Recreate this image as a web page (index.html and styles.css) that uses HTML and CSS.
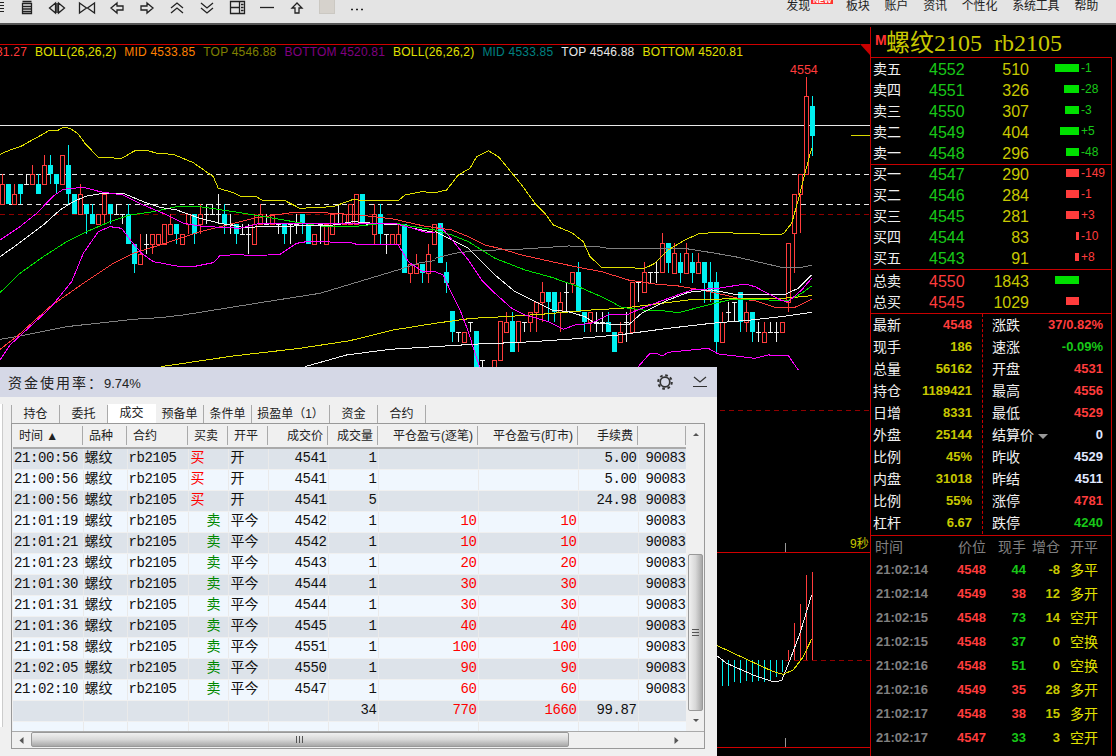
FILE: index.html
```html
<!DOCTYPE html>
<html lang="zh">
<head>
<meta charset="utf-8">
<title>螺纹2105</title>
<link rel="stylesheet" href="styles.css">
</head>
<body>
<header class="toolbar">
  <span class="sliver"></span>
  <svg class="tool" viewBox="0 0 30 16"><path d="M10.5 1.5h9M10.5 3.5h9v10h-9zM10.5 6.5h9M10.5 9h9M10.5 11.5h9"/></svg>
  <svg class="tool" viewBox="0 0 30 16"><path d="M13.5 3l-6 5 6 5zM16.5 3l6 5-6 5zM15 3v10"/></svg>
  <svg class="tool" viewBox="0 0 30 16"><path d="M7.5 3v10l7-5zM22.5 3v10l-7-5z"/></svg>
  <svg class="tool" viewBox="0 0 30 16"><path d="M15 3l-6 5 6 5v-3h6V6h-6z"/></svg>
  <svg class="tool" viewBox="0 0 30 16"><path d="M15 3l6 5-6 5v-3H9V6h6z"/></svg>
  <svg class="tool" viewBox="0 0 30 16"><path d="M9 8l6-5 6 5M9 13l6-5 6 5"/></svg>
  <svg class="tool" viewBox="0 0 30 16"><path d="M9 3l6 5 6-5M9 8l6 5 6-5"/></svg>
  <svg class="tool" viewBox="0 0 30 16"><path d="M8.500 1.500h14v12h-14zM17.500 1.500v12M8.500 7.500h9M19 4.500h2.500M19 7.500h2.500M19 10.500h2.500"/></svg>
  <svg class="tool" viewBox="0 0 30 16"><path d="M8 7.500h14"/></svg>
  <svg class="tool" viewBox="0 0 30 16"><path d="M15 3l-5 5h3v5h4V8h3z"/></svg>
  <span class="tool-swatch"><span class="swatch"></span></span>
  <svg class="tool" viewBox="0 0 30 16"><path d="M9 9.500h2M14 9.500h2M19 9.500h2"/></svg>
  <nav class="menu">
    <span class="menu-item menu-new">发现<i class="badge">NEW</i></span>
    <span class="menu-item">板块</span>
    <span class="menu-item">账户</span>
    <span class="menu-item">资讯</span>
    <span class="menu-item">个性化</span>
    <span class="menu-item">系统工具</span>
    <span class="menu-item">帮助</span>
  </nav>
</header>

<main class="main">
  <section class="chart">
    <svg class="plot" viewBox="0 25 870 731" width="870" height="731">
      <path class="hl red-line" d="M0 44.500H860M0 552.500H870M0 747.500H870"/>
      <path class="corner" d="M860 44h10v11z"/>
      <path class="hl white-line" d="M0 125.500H870"/>
      <path class="hl yellow-line" d="M851 135.500H870"/>
      <path class="hl white-dash" d="M0 174.500H870M0 204.500H870"/>
      <path class="hl red-dash" d="M0 214.500H870M0 410.500H870M785 660.500H870"/>
      <path class="tick-mark" d="M785.500 543V552M785.500 738V747"/>

      <path class="c-red" d="M2.500 174V184M14.500 184V194M32.500 165V174M44.500 155V165M80.500 184V194M104.500 214V224M140.500 234V254M152.500 244V254M170.500 214V224M188.500 224V234M200.500 204V234M254.500 214V224M260.500 204V214M374.500 204V244M398.500 224V234M410.500 273V283M416.500 254V264M428.500 244V283M506.500 312V322M518.500 342V352M530.500 322V332M536.500 312V332M542.500 282V322M560.500 292V332M572.500 283V293M590.500 322V332M620.500 322V332M644.500 262V272M662.500 233V243M674.500 243V253M686.500 243V253M698.500 253V262M722.500 312V322M746.500 302V332M764.500 322V332M788.500 302V312M794.500 233V273M800.500 194V233M806.500 77V96"/>
      <path class="c-redbody" d="M.5 184.500h4v20h-4zM12.500 194.500h4v10h-4zM30.500 174.500h4v10h-4zM42.500 165.500h4v19h-4zM60.500 155.500h4v29h-4zM78.500 194.500h4v20h-4zM96.500 214.500h4v10h-4zM102.500 194.500h4v20h-4zM138.500 254.500h4v10h-4zM150.500 234.500h4v10h-4zM156.500 234.500h4v10h-4zM162.500 224.500h4v20h-4zM168.500 224.500h4v10h-4zM180.500 234.500h4v10h-4zM186.500 214.500h4v10h-4zM198.500 214.500h4v10h-4zM252.500 224.500h4v20h-4zM258.500 214.500h4v10h-4zM270.500 214.500h4v10h-4zM312.500 234.500h4v10h-4zM324.500 224.500h4v20h-4zM330.500 214.500h4v20h-4zM342.500 214.500h4v10h-4zM348.500 204.500h4v20h-4zM354.500 194.500h4v30h-4zM372.500 214.500h4v20h-4zM390.500 234.500h4v10h-4zM396.500 234.500h4v10h-4zM408.500 264.500h4v9h-4zM414.500 264.500h4v9h-4zM426.500 254.500h4v19h-4zM432.500 224.500h4v20h-4zM462.500 332.500h4v10h-4zM492.500 360.500h4v10h-4zM498.500 321.500h4v39h-4zM504.500 322.500h4v10h-4zM516.500 321.500h4v21h-4zM528.500 312.500h4v10h-4zM534.500 302.500h4v10h-4zM540.500 292.500h4v10h-4zM558.500 302.500h4v10h-4zM570.500 272.500h4v11h-4zM588.500 312.500h4v10h-4zM618.500 332.500h4v10h-4zM630.500 282.500h4v50h-4zM642.500 272.500h4v20h-4zM660.500 243.500h4v29h-4zM672.500 253.500h4v20h-4zM684.500 253.500h4v20h-4zM696.500 262.500h4v11h-4zM720.500 322.500h4v20h-4zM744.500 312.500h4v10h-4zM762.500 332.500h4v10h-4zM780.500 322.500h4v10h-4zM786.500 243.500h4v59h-4zM792.500 194.500h4v39h-4zM798.500 174.500h4v20h-4zM804.500 96.500h4v78h-4z"/>
      <path class="c-cyan" d="M20.500 194V204M38.500 174V184M50.500 155V184M56.500 184V194M68.500 145V204M86.500 214V234M92.500 204V214M110.500 214V224M128.500 204V214M134.500 264V273M176.500 234V244M194.500 234V244M224.500 204V234M236.500 234V244M284.500 234V244M302.500 224V234M380.500 204V244M422.500 273V283M446.500 262V293M452.500 332V342M512.500 312V321M548.500 302V322M554.500 312V322M578.500 262V272M584.500 322V332M608.500 312V322M668.500 263V273M680.500 253V283M692.500 253V283M704.500 283V303M710.500 262V302M716.500 272V352M740.500 322V332M752.500 332V342M812.500 96V156"/>
      <path class="c-cyanbody" d="M6 184h5v20h-5zM18 184h5v10h-5zM36 184h5v10h-5zM48 165h5v9h-5zM54 174h5v10h-5zM66 165h5v29h-5zM72 194h5v20h-5zM84 204h5v10h-5zM90 214h5v10h-5zM108 204h5v10h-5zM126 214h5v30h-5zM132 244h5v20h-5zM174 224h5v10h-5zM192 214h5v20h-5zM222 214h5v10h-5zM234 224h5v10h-5zM282 224h5v10h-5zM300 214h5v10h-5zM306 224h5v20h-5zM360 194h5v30h-5zM378 214h5v20h-5zM402 224h5v49h-5zM420 264h5v9h-5zM438 223h5v40h-5zM444 272h5v11h-5zM450 311h5v21h-5zM474 331h5v39h-5zM510 321h5v31h-5zM546 292h5v10h-5zM552 292h5v20h-5zM576 272h5v40h-5zM582 312h5v10h-5zM606 322h5v10h-5zM612 332h5v20h-5zM666 243h5v20h-5zM678 262h5v11h-5zM690 262h5v11h-5zM702 262h5v21h-5zM708 282h5v10h-5zM714 282h5v60h-5zM738 292h5v30h-5zM750 312h5v20h-5zM810 106h5v30h-5z"/>
      <path class="c-white" d="M24 184.500h5M26.500 174V184M114 214.500h5M116.500 204V214M120 214.500h5M122.500 214V224M144 244.500h5M146.500 234V254M204 214.500h5M206.500 204V224M210 214.500h5M212.500 204V214M216 214.500h5M218.500 194V224M228 224.500h5M230.500 214V234M240 234.500h5M242.500 224V234M246 234.500h5M248.500 224V254M264 224.500h5M266.500 214V224M276 224.500h5M278.500 224V234M288 224.500h5M290.500 224V244M294 224.500h5M296.500 214V234M318 224.500h5M320.500 224V244M336 224.500h5M338.500 204V224M366 224.500h5M384 234.500h5M386.500 234V254M456 332.500h5M458.500 332V342M468 322.500h5M470.500 322V332M480 360.500h5M482.500 360V370M522 322.500h5M524.500 322V332M564 292.500h5M566.500 283V312M594 322.500h5M596.500 312V332M600 322.500h5M602.500 312V332M624 322.500h5M626.500 312V342M636 282.500h5M638.500 282V302M648 272.500h5M650.500 272V283M654 272.500h5M656.500 262V283M726 312.500h5M728.500 302V322M732 302.500h5M734.500 302V322M756 332.500h5M758.500 322V342M768 332.500h5M770.500 322V332M774 332.500h5M776.500 322V342"/>

      <g transform="translate(0 110) scale(.3333)">
        <polyline class="ln gray" points="0,688 60,678 200,650 400,628 480,623 550,615 800,575 960,550 1200,478 1260,458 1305,452"/>
        <polyline class="ln yellow" points="0,133 30,120 65,108 100,88 130,72 150,60 170,63 190,52 210,55 235,72 255,100 295,142 365,145 405,122 445,122 470,130 520,133 580,158 640,200 655,235 700,248 720,258 770,260 785,270 855,272 900,295 1000,290 1060,268 1090,272 1195,272 1215,255 1265,245 1305,248"/>
        <polyline class="ln yellow" points="483,770 700,738 900,715 1050,692 1180,660 1305,640"/>
        <polyline class="ln white" points="915,770 1040,735 1170,718 1305,710"/>
        <polyline class="ln red" points="0,718 50,680 150,590 250,520 340,460 400,430 480,405 600,365 680,345 760,325 880,307 950,307 1080,315 1180,327 1280,350 1305,352"/>
        <polyline class="ln green" points="0,548 60,490 130,440 200,395 260,365 330,335 390,315 460,305 530,290 600,290 720,308 780,318 880,335 960,348 1060,350 1130,342 1200,342 1240,350 1305,360"/>
        <polyline class="ln white" points="0,440 50,405 130,345 180,300 220,275 260,258 310,250 370,250 430,275 480,292 530,300 600,325 660,340 730,352 1000,345 1060,335 1120,340 1200,345 1240,355 1305,368"/>
        <polyline class="ln magenta" points="0,390 60,350 110,310 160,258 190,238 250,232 300,245 370,255 430,285 490,310 550,340 600,348 660,352 720,355 780,340 1000,340 1100,340 1190,342 1240,355 1280,368 1305,368"/>
        <polyline class="ln magenta" points="0,750 30,705 90,650 150,595 215,515 250,430 295,365 330,350 365,355 395,395 425,430 460,455 540,470 580,470 640,458 660,437 720,433 750,438 840,433 890,400 920,395 1050,397 1070,403 1195,405 1225,455 1265,483 1305,485"/>
      </g>
      <g transform="translate(435 60) scale(.3333)">
        <polyline class="ln gray" points="0,595 60,580 120,572 250,568 400,558 490,560 530,567 760,567 830,578 900,590 1040,622 1100,622 1130,616"/>
        <polyline class="ln yellow" points="0,398 35,390 70,345 105,325 125,290 160,272 190,290 215,320 260,375 300,430 330,460 355,495 410,518 445,545 465,590 500,622 580,622 625,627 660,610 700,570 750,540 790,522 840,517 1000,523 1045,522 1070,490 1090,420 1110,340 1130,265"/>
        <polyline class="ln yellow" points="0,790 110,775 210,770 330,762 470,750 560,745 640,735 760,720 900,716 1060,714 1130,707"/>
        <polyline class="ln white" points="0,860 130,852 260,847 400,838 550,825 700,805 830,790 950,780 1040,770 1130,757"/>
        <polyline class="ln red" points="0,503 50,510 100,530 150,555 200,567 260,585 350,605 430,622 500,635 580,660 660,672 730,678 800,690 870,705 920,718 960,722 1020,742 1080,742 1130,718"/>
        <polyline class="ln green" points="0,510 50,525 100,545 180,595 270,630 350,652 430,680 510,715 560,742 640,752 690,753 730,758 820,735 890,718 1000,720 1060,722 1100,700 1130,678"/>
        <polyline class="ln white" points="0,515 50,540 100,565 180,645 240,695 300,725 350,750 400,755 450,770 480,790 580,795 620,760 700,720 760,697 830,690 900,703 1050,703 1090,685 1130,645"/>
        <polyline class="ln magenta" points="15,497 60,550 100,600 140,660 180,700 230,745 270,765 340,785 385,808 420,795 470,790 520,765 575,765 620,745 700,715 770,690 850,685 930,672 960,680 1040,722 1060,725 1100,690 1130,655"/>
        <polyline class="ln magenta" points="0,635 25,645 45,690 75,750 100,815 120,880 135,925"/>
        <polyline class="ln magenta" points="610,920 645,880 665,880 682,888 700,877 820,865 850,882 960,895 1000,885 1060,887 1090,930"/>
      </g>

      <path class="c-cyan" d="M722.500 660V686M728.500 660V686M734.500 660V682M740.500 660V683M746.500 660V681M752.500 660V682M758.500 660V681M764.500 660V682M770.500 660V681M776.500 660V677M782.500 660V672"/>
      <path class="c-red" d="M788.500 650V660M794.500 623V660M800.500 604V660M806.500 575V660M812.500 572V660"/>
      <g transform="translate(360 540) scale(.3333)">
        <polyline class="ln white" points="1072,348 1100,370 1180,405 1240,425 1265,422 1290,360 1320,280 1355,165"/>
        <polyline class="ln yellow" points="1072,317 1160,358 1240,395 1270,403 1300,390 1330,350 1355,297"/>
      </g>
      <text class="peak" x="790" y="74">4554</text>
      <text class="seconds" x="850" y="548">9秒</text>
    </svg>
    <div class="legend">
      <span class="lg-red">31.27</span>
      <span class="lg-yellow">BOLL(26,26,2)</span>
      <span class="lg-orange">MID 4533.85</span>
      <span class="lg-olive">TOP 4546.88</span>
      <span class="lg-purple">BOTTOM 4520.81</span>
      <span class="lg-yellow">BOLL(26,26,2)</span>
      <span class="lg-teal">MID 4533.85</span>
      <span class="lg-white">TOP 4546.88</span>
      <span class="lg-yellow">BOTTOM 4520.81</span>
    </div>
  </section>

  <aside class="side">
    <h1 class="title"><span class="title-m">M</span><span class="title-text">螺纹2105&nbsp;&nbsp;rb2105</span></h1>
    <div class="quote">
      <div class="book">
        <div class="book-row"><span>卖五</span><span class="up">4552</span><span class="qty">510</span><i class="bar bar-g" style="width:24px"></i><span class="delta up">-1</span></div>
        <div class="book-row"><span>卖四</span><span class="up">4551</span><span class="qty">326</span><i class="bar bar-g" style="width:15px"></i><span class="delta up">-28</span></div>
        <div class="book-row"><span>卖三</span><span class="up">4550</span><span class="qty">307</span><i class="bar bar-g" style="width:14px"></i><span class="delta up">-3</span></div>
        <div class="book-row"><span>卖二</span><span class="up">4549</span><span class="qty">404</span><i class="bar bar-g" style="width:19px"></i><span class="delta up">+5</span></div>
        <div class="book-row"><span>卖一</span><span class="up">4548</span><span class="qty">296</span><i class="bar bar-g" style="width:13px"></i><span class="delta up">-48</span></div>
      </div>
      <div class="book book-buy">
        <div class="book-row"><span>买一</span><span class="up">4547</span><span class="qty">290</span><i class="bar bar-r" style="width:13px"></i><span class="delta dn">-149</span></div>
        <div class="book-row"><span>买二</span><span class="up">4546</span><span class="qty">284</span><i class="bar bar-r" style="width:13px"></i><span class="delta dn">-1</span></div>
        <div class="book-row"><span>买三</span><span class="up">4545</span><span class="qty">281</span><i class="bar bar-r" style="width:13px"></i><span class="delta dn">+3</span></div>
        <div class="book-row"><span>买四</span><span class="up">4544</span><span class="qty">83</span><i class="bar bar-r" style="width:3px"></i><span class="delta dn">-10</span></div>
        <div class="book-row"><span>买五</span><span class="up">4543</span><span class="qty">91</span><i class="bar bar-r" style="width:4px"></i><span class="delta dn">+8</span></div>
      </div>
      <div class="book">
        <div class="book-row"><span>总卖</span><span class="dn">4550</span><span class="qty">1843</span><i class="bar bar-g" style="width:24px"></i></div>
        <div class="book-row"><span>总买</span><span class="dn">4545</span><span class="qty">1029</span><i class="bar bar-r" style="width:13px"></i></div>
      </div>
      <div class="stats">
        <div class="stats-col stats-left">
          <div class="st"><span>最新</span><b class="dn">4548</b></div>
          <div class="st"><span>现手</span><b class="yl">186</b></div>
          <div class="st"><span>总量</span><b class="yl">56162</b></div>
          <div class="st"><span>持仓</span><b class="yl">1189421</b></div>
          <div class="st"><span>日增</span><b class="yl">8331</b></div>
          <div class="st"><span>外盘</span><b class="yl">25144</b></div>
          <div class="st"><span>比例</span><b class="yl">45%</b></div>
          <div class="st"><span>内盘</span><b class="yl">31018</b></div>
          <div class="st"><span>比例</span><b class="yl">55%</b></div>
          <div class="st"><span>杠杆</span><b class="yl">6.67</b></div>
        </div>
        <div class="stats-col stats-right">
          <div class="st"><span>涨跌</span><b class="dn">37/0.82%</b></div>
          <div class="st"><span>速涨</span><b class="up">-0.09%</b></div>
          <div class="st"><span>开盘</span><b class="dn">4531</b></div>
          <div class="st"><span>最高</span><b class="dn">4556</b></div>
          <div class="st"><span>最低</span><b class="dn">4529</b></div>
          <div class="st"><span>结算价<i class="caret"></i></span><b class="wt">0</b></div>
          <div class="st"><span>昨收</span><b class="wt">4529</b></div>
          <div class="st"><span>昨结</span><b class="wt">4511</b></div>
          <div class="st"><span>涨停</span><b class="dn">4781</b></div>
          <div class="st"><span>跌停</span><b class="up">4240</b></div>
        </div>
      </div>
      <div class="ticks">
        <div class="tk tk-head"><span>时间</span><span class="r">价位</span><span class="r">现手</span><span class="r">增仓</span><span class="ty">开平</span></div>
        <div class="tk"><b class="gy">21:02:14</b><b class="r dn">4548</b><b class="r up">44</b><b class="r yl">-8</b><span class="ty">多平</span></div>
        <div class="tk"><b class="gy">21:02:14</b><b class="r dn">4549</b><b class="r dn">38</b><b class="r yl">12</b><span class="ty">多开</span></div>
        <div class="tk"><b class="gy">21:02:15</b><b class="r dn">4548</b><b class="r up">73</b><b class="r yl">14</b><span class="ty">空开</span></div>
        <div class="tk"><b class="gy">21:02:15</b><b class="r dn">4548</b><b class="r up">37</b><b class="r yl">0</b><span class="ty">空换</span></div>
        <div class="tk"><b class="gy">21:02:16</b><b class="r dn">4548</b><b class="r up">51</b><b class="r yl">0</b><span class="ty">空换</span></div>
        <div class="tk"><b class="gy">21:02:16</b><b class="r dn">4549</b><b class="r dn">35</b><b class="r yl">28</b><span class="ty">多开</span></div>
        <div class="tk"><b class="gy">21:02:17</b><b class="r dn">4548</b><b class="r dn">38</b><b class="r yl">15</b><span class="ty">多开</span></div>
        <div class="tk"><b class="gy">21:02:17</b><b class="r dn">4547</b><b class="r up">33</b><b class="r yl">3</b><span class="ty">空开</span></div>
      </div>
    </div>
  </aside>
</main>

<section class="window">
  <div class="win-head">
    <span class="win-title">资金使用率：<em>9.74%</em></span>
    <span class="win-icons">
      <svg class="gear" viewBox="0 0 18 18"><circle class="gear-ring" cx="9" cy="9" r="4.800"/><circle class="gear-teeth" cx="9" cy="9" r="6.800"/></svg>
      <svg class="fold" viewBox="0 0 16 12"><path d="M2 1l6 5 6-5M1 10.500h14"/></svg>
    </span>
  </div>
  <div class="win-body">
    <div class="edge"></div>
    <div class="win-main">
      <div class="tabs">
        <span class="tab" style="width:48px">持仓</span>
        <span class="tab" style="width:48px">委托</span>
        <span class="tab tab-on" style="width:48px">成交</span>
        <span class="tab" style="width:48px">预备单</span>
        <span class="tab" style="width:48px">条件单</span>
        <span class="tab" style="width:78px">损盈单（1）</span>
        <span class="tab" style="width:48px">资金</span>
        <span class="tab" style="width:48px">合约</span>
      </div>
      <div class="grid-box">
        <div class="grid-view">
          <table class="trades">
            <colgroup><col class="w70"><col class="w44"><col class="w61"><col class="w40"><col class="w40"><col class="w60"><col class="w50"><col class="w100"><col class="w100"><col class="w60"><col class="w48"></colgroup>
            <thead><tr><th>时间 ▲</th><th>品种</th><th>合约</th><th>买卖</th><th>开平</th><th class="n">成交价</th><th class="n">成交量</th><th class="n">平仓盈亏(逐笔)</th><th class="n">平仓盈亏(盯市)</th><th class="n">手续费</th><th></th></tr></thead>
            <tbody>
              <tr><td>21:00:56</td><td class="cn">螺纹</td><td>rb2105</td><td class="buy">买</td><td class="off">开</td><td class="n">4541</td><td class="n">1</td><td></td><td></td><td class="n">5.00</td><td class="ac">90083</td></tr>
              <tr><td>21:00:56</td><td class="cn">螺纹</td><td>rb2105</td><td class="buy">买</td><td class="off">开</td><td class="n">4541</td><td class="n">1</td><td></td><td></td><td class="n">5.00</td><td class="ac">90083</td></tr>
              <tr><td>21:00:56</td><td class="cn">螺纹</td><td>rb2105</td><td class="buy">买</td><td class="off">开</td><td class="n">4541</td><td class="n">5</td><td></td><td></td><td class="n">24.98</td><td class="ac">90083</td></tr>
              <tr><td>21:01:19</td><td class="cn">螺纹</td><td>rb2105</td><td class="sell">卖</td><td class="off">平今</td><td class="n">4542</td><td class="n">1</td><td class="n pl">10</td><td class="n pl">10</td><td></td><td class="ac">90083</td></tr>
              <tr><td>21:01:21</td><td class="cn">螺纹</td><td>rb2105</td><td class="sell">卖</td><td class="off">平今</td><td class="n">4542</td><td class="n">1</td><td class="n pl">10</td><td class="n pl">10</td><td></td><td class="ac">90083</td></tr>
              <tr><td>21:01:23</td><td class="cn">螺纹</td><td>rb2105</td><td class="sell">卖</td><td class="off">平今</td><td class="n">4543</td><td class="n">1</td><td class="n pl">20</td><td class="n pl">20</td><td></td><td class="ac">90083</td></tr>
              <tr><td>21:01:30</td><td class="cn">螺纹</td><td>rb2105</td><td class="sell">卖</td><td class="off">平今</td><td class="n">4544</td><td class="n">1</td><td class="n pl">30</td><td class="n pl">30</td><td></td><td class="ac">90083</td></tr>
              <tr><td>21:01:31</td><td class="cn">螺纹</td><td>rb2105</td><td class="sell">卖</td><td class="off">平今</td><td class="n">4544</td><td class="n">1</td><td class="n pl">30</td><td class="n pl">30</td><td></td><td class="ac">90083</td></tr>
              <tr><td>21:01:36</td><td class="cn">螺纹</td><td>rb2105</td><td class="sell">卖</td><td class="off">平今</td><td class="n">4545</td><td class="n">1</td><td class="n pl">40</td><td class="n pl">40</td><td></td><td class="ac">90083</td></tr>
              <tr><td>21:01:58</td><td class="cn">螺纹</td><td>rb2105</td><td class="sell">卖</td><td class="off">平今</td><td class="n">4551</td><td class="n">1</td><td class="n pl">100</td><td class="n pl">100</td><td></td><td class="ac">90083</td></tr>
              <tr><td>21:02:05</td><td class="cn">螺纹</td><td>rb2105</td><td class="sell">卖</td><td class="off">平今</td><td class="n">4550</td><td class="n">1</td><td class="n pl">90</td><td class="n pl">90</td><td></td><td class="ac">90083</td></tr>
              <tr><td>21:02:10</td><td class="cn">螺纹</td><td>rb2105</td><td class="sell">卖</td><td class="off">平今</td><td class="n">4547</td><td class="n">1</td><td class="n pl">60</td><td class="n pl">60</td><td></td><td class="ac">90083</td></tr>
              <tr><td></td><td></td><td></td><td></td><td></td><td></td><td class="n">34</td><td class="n pl">770</td><td class="n pl">1660</td><td class="n">99.87</td><td></td></tr>
              <tr><td></td><td></td><td></td><td></td><td></td><td></td><td></td><td></td><td></td><td></td><td></td></tr>
            </tbody>
          </table>
        </div>
        <div class="vbar">
          <svg class="arrow" viewBox="0 0 16 20"><path d="M5 12l3-3 3 3z"/></svg>
          <span class="vthumb"><i class="vgrip"></i></span>
          <svg class="arrow" viewBox="0 0 16 20"><path d="M5 8l3 3 3-3z"/></svg>
        </div>
        <div class="hbar">
          <svg class="arrow-h" viewBox="0 0 18 17"><path d="M11 5l-4 3.500 4 3.500z"/></svg>
          <span class="hthumb"><i class="hgrip"></i></span>
          <svg class="arrow-h arrow-end" viewBox="0 0 18 17"><path d="M7 5l4 3.500-4 3.500z"/></svg>
        </div>
      </div>
    </div>
  </div>
</section>
</body>
</html>
```
FILE: styles.css
```css
* { box-sizing: border-box; }
html, body { margin: 0; padding: 0; height: 100%; overflow: hidden; }
body {
  background: #000;
  width: 1116px;
  height: 756px;
  position: relative;
  font-family: "Liberation Sans", "Noto Sans CJK SC", sans-serif;
}

/* toolbar */
.toolbar {
  height: 25px;
  background: #e4e4e4;
  border-bottom: 2px solid #555;
  display: flex;
  align-items: flex-start;
  overflow: hidden;
}
.sliver { width: 12px; height: 10px; margin-top: 2px; background: repeating-linear-gradient(#222 0 1px, #e4e4e4 1px 3px); flex: none; clip-path: inset(0 8px 0 0); }
.tool { width: 30px; height: 16px; flex: none; fill: none; stroke: #222; stroke-width: 1.3; }
.tool-swatch { width: 30px; flex: none; display: flex; justify-content: center; }
.swatch { width: 16px; height: 14px; background: #d6d2cc; border: 1px solid #cbc8c2; border-top: 0; }
.menu { margin-left: auto; display: flex; padding-right: 18px; font-size: 12px; line-height: 12px; letter-spacing: -.2px; color: #222; }
.menu-item { margin-left: 15px; }
.menu-new { margin-right: 21px; position: relative; }
.badge {
  position: absolute; left: 25px; top: 0; width: 22px; height: 4px; overflow: hidden;
  background: #f33; color: #fff; font: bold 8px/1px "Liberation Sans", sans-serif; letter-spacing: 0; text-align: center;
}

/* main */
.main { display: flex; height: 731px; }
.chart { width: 870px; flex: none; position: relative; overflow: hidden; }
.plot { display: block; }
.hl { fill: none; shape-rendering: crispEdges; stroke-width: 1; }
.red-line { stroke: #d00000; }
.white-line { stroke: #e8e8e8; }
.yellow-line { stroke: #d8d800; }
.white-dash { stroke: #e8e8e8; stroke-dasharray: 5 4; }
.red-dash { stroke: #900000; stroke-dasharray: 5 4; }
.corner { fill: #c80000; }
.tick-mark { stroke: #999; fill: none; shape-rendering: crispEdges; }
.c-red { stroke: #ff3c3c; fill: none; shape-rendering: crispEdges; }
.c-redbody { stroke: #ff3c3c; fill: #000; shape-rendering: crispEdges; }
.c-cyan { stroke: #00f0f0; fill: none; shape-rendering: crispEdges; }
.c-cyanbody { fill: #00f0f0; shape-rendering: crispEdges; }
.c-white { stroke: #f0f0f0; fill: none; shape-rendering: crispEdges; }
.ln { fill: none; stroke-width: 1; vector-effect: non-scaling-stroke; shape-rendering: crispEdges; }
.ln.gray { stroke: #808080; }
.ln.yellow { stroke: #e0e000; }
.ln.white { stroke: #f0f0f0; }
.ln.red { stroke: #ff3c3c; }
.ln.green { stroke: #00e000; }
.ln.magenta { stroke: #ff00ff; }
.peak { fill: #ff3c3c; font-size: 12.500px; }
.seconds { fill: #c8c800; font-size: 12px; }
.legend {
  position: absolute; top: 20px; left: -4px;
  display: flex; gap: 8px;
  font-size: 12px; line-height: 14px; letter-spacing: .2px; white-space: nowrap;
}
.lg-red { color: #ff3c3c; }
.lg-yellow { color: #e0e000; }
.lg-orange { color: #ff8000; }
.lg-olive { color: #808000; }
.lg-purple { color: #800080; }
.lg-teal { color: #008080; }
.lg-white { color: #e8e8e8; }

/* side */
.side { width: 246px; flex: none; border-left: 1px solid #c80000; margin-top: 2px; }
.title { margin: 0; height: 30px; display: flex; align-items: center; padding-left: 4px; font-weight: 400; color: #c8c800; }
.title-m { color: #ff3030; font: bold 14px/14px "Liberation Sans", sans-serif; align-self: flex-start; margin-top: 6px; width: 11px; }
.title-text { font: 24px/30px "Liberation Serif", "Noto Sans CJK SC", serif; white-space: nowrap; margin-top: 2px; }
.quote { width: 241px; height: 699px; border: 1px solid #c80000; border-left: 0; border-bottom: 0; overflow: hidden; }
.book { border-bottom: 1px solid #c80000; padding-top: 1px; }
.book-buy { margin-top: -1px; padding-top: 0; }
.book-row {
  height: 21px; display: grid;
  grid-template-columns: 56px 46px 54px 50px auto;
  padding-left: 2px; align-items: center;
  color: #f0f0f0; font-size: 14px; line-height: 21px;
}
.book-row .up, .book-row .dn, .book-row .qty { font-size: 16px; }
.up { color: #18c818; }
.dn { color: #ff3c3c; }
.yl { color: #c8c800; }
.wt { color: #e0e8ff; }
.gy { color: #808080; }
.qty { color: #c8c800; text-align: right; }
.bar { height: 8px; justify-self: end; margin-top: -3px; }
.bar-g { background: #00e000; }
.bar-r { background: #ff3c3c; }
.book-row .delta { font-size: 12px; padding-left: 2px; margin-top: -3px; line-height: 14px; }

.stats { display: flex; border-bottom: 1px solid #c80000; height: 222px; }
.stats-col { height: 220px; }
.stats-left { width: 112px; border-right: 1px dashed #c80000; padding: 0 10px 0 2px; }
.stats-right { flex: 1; padding: 0 8px 0 9px; }
.st { height: 22px; display: flex; justify-content: space-between; align-items: center; color: #f0f0f0; font-size: 14px; line-height: 22px; }
.st b { font-size: 13px; }
.caret { display: inline-block; margin-left: 4px; border: 5px solid transparent; border-top: 5px solid #999; border-bottom: 0; vertical-align: middle; }

.tk {
  height: 24px; display: grid;
  grid-template-columns: 74px 36px 40px 34px auto;
  padding-left: 5px; align-items: center;
  line-height: 24px; font-size: 13px;
}
.tk-head { height: 22px; line-height: 22px; font-size: 14px; color: #808080; padding-left: 4px; grid-template-columns: 75px 36px 40px 34px auto; }
.r { text-align: right; }
.ty { font-size: 14px; color: #e0e000; padding-left: 10px; }
.tk-head .ty { color: #808080; }

/* floating window */
.window {
  position: absolute; left: 0; top: 367px; width: 717px; height: 389px;
  background: #f0f0f0; overflow: hidden;
}
.win-head {
  height: 30px; background: #d5d8e6; display: flex; align-items: center; justify-content: space-between;
  padding: 0 9px 0 8px;
}
.win-title { font-size: 14px; letter-spacing: 2px; color: #222; }
.win-title em { font-style: normal; font-size: 13px; letter-spacing: 0; }
.win-icons { display: flex; align-items: center; gap: 18px; }
.gear { width: 18px; height: 18px; fill: none; stroke: #333; }
.gear-ring { stroke-width: 1.700; }
.gear-teeth { stroke-width: 2; stroke-dasharray: 2.700 2.640; }
.fold { width: 16px; height: 12px; fill: none; stroke: #333; stroke-width: 1.200; }
.win-body { display: flex; height: 359px; padding-top: 7px; }
.edge { width: 3px; height: 323px; background: #fff; border-right: 1px solid #ccc; flex: none; }
.win-main { margin-left: 8px; }
.tabs { display: flex; height: 19px; padding-left: 1px; }
.tab {
  font-size: 12px; line-height: 18px; text-align: center; color: #222;
  border-right: 1px solid #aaa; margin-top: 1px; height: 18px;
  white-space: nowrap;
}
.tab:first-child { box-shadow: -1px 0 0 #aaa; }
.tab-on { background: #fff; margin-top: 0; height: 19px; border-right-color: #fff; }

.grid-box {
  width: 694px; height: 326px; border: 1px solid #999; background: #f0f0f0;
  display: grid; grid-template-columns: 676px 16px; grid-template-rows: 307px 17px;
}
.grid-view { height: 307px; overflow: hidden; padding-left: 1px; }
.trades {
  width: 673px; table-layout: fixed; border-collapse: collapse;
  font: 14px/18px "Liberation Mono", "Noto Sans CJK SC", monospace;
  letter-spacing: -.4px;
  color: #111;
}
.w70 { width: 70px; } .w44 { width: 44px; } .w61 { width: 61px; } .w40 { width: 40px; }
.w60 { width: 60px; } .w50 { width: 50px; } .w100 { width: 100px; } .w48 { width: 48px; }
.trades th {
  height: 24px; padding: 0 6px; font: 400 12px/22px "Liberation Sans", "Noto Sans CJK SC", sans-serif;
  letter-spacing: 0; text-align: left; color: #222; white-space: nowrap;
  border-bottom: 2px solid #aaa;
  background: linear-gradient(#aaa, #aaa) right 2px / 1px 19px no-repeat;
}
.trades th.n { text-align: right; padding-right: 5px; }
.trades td {
  height: 21px; padding: 0 0 0 1px; white-space: nowrap; overflow: hidden; vertical-align: top;
  border-right: 1px solid #eaeaea; border-bottom: 1px solid #f0f0f0;
}
.trades td:last-child { border-right: 0; }
.trades td.n { text-align: right; padding-right: 1px; }
.trades tbody tr:nth-child(odd) td { background: #dde3ea; }
.trades tbody tr:nth-child(even) td { background: #f0f7fe; }
.cn { letter-spacing: 0; }
.buy { color: #f00; padding-left: 2px !important; letter-spacing: 0; }
.sell { color: #080; padding-left: 18px !important; letter-spacing: 0; }
.off { padding-left: 2px !important; letter-spacing: 0; }
.pl { color: #f00; }
.ac { padding-left: 7px !important; }

.vbar { display: flex; flex-direction: column; align-items: stretch; }
.arrow { width: 16px; height: 20px; fill: #555; flex: none; }
.vthumb {
  width: 15px; margin: 110px 0 0 0; height: 158px; border: 1px solid #999; border-radius: 2px;
  background: linear-gradient(90deg, #f0f0f0, #d8d8d8 50%, #a8a8a8);
  display: flex; align-items: center; justify-content: center;
}
.vgrip { width: 7px; height: 8px; background: repeating-linear-gradient(#555 0 1px, transparent 1px 3px); }
.hbar { grid-column: 1 / 3; display: flex; align-items: stretch; position: relative; border-top: 1px solid #aaa; }
.arrow-h { width: 19px; height: 17px; fill: #555; flex: none; }
.hthumb {
  width: 538px; height: 15px; border: 1px solid #999; border-radius: 2px; background: linear-gradient(#f0f0f0, #d8d8d8 50%, #a8a8a8);
  display: flex; align-items: center; justify-content: flex-end; padding-right: 264px;
}
.hgrip { width: 8px; height: 7px; background: repeating-linear-gradient(90deg, #555 0 1px, transparent 1px 3px); }
.arrow-end { margin-left: auto; margin-right: 18px; }
```
